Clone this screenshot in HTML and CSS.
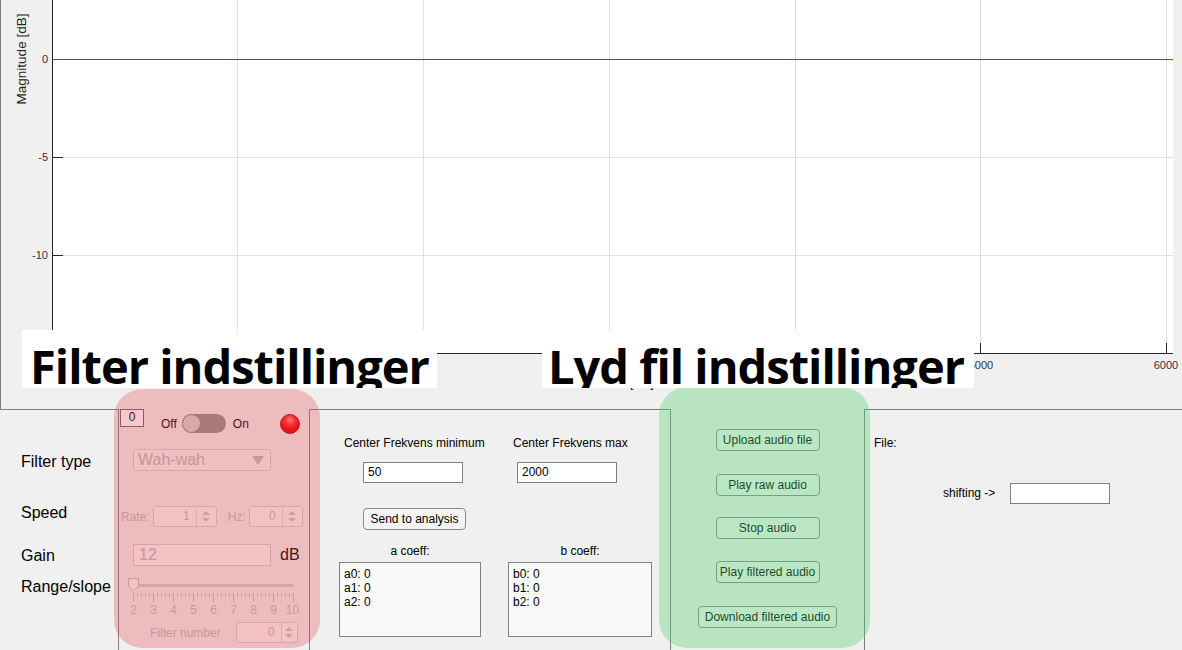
FILE: index.html
```html
<!DOCTYPE html>
<html>
<head>
<meta charset="utf-8">
<title>Filter app</title>
<link rel="stylesheet" href="styles.css">
</head>
<body>
<div class="app">
  <div class="figure">
    <svg class="plot" width="1182" height="409" viewBox="0 0 1182 409">
      <line class="frame" x1="0.5" y1="0" x2="0.5" y2="409"/>
      <rect class="axes-bg" x="52" y="0" width="1121" height="353"/>
      <g class="grid">
        <line x1="237.5" y1="0" x2="237.5" y2="353"/>
        <line x1="423.5" y1="0" x2="423.5" y2="353"/>
        <line x1="609.5" y1="0" x2="609.5" y2="353"/>
        <line x1="795.5" y1="0" x2="795.5" y2="353"/>
        <line x1="980.5" y1="0" x2="980.5" y2="353"/>
        <line x1="1166.5" y1="0" x2="1166.5" y2="353"/>
        <line x1="53" y1="157.5" x2="1173" y2="157.5"/>
        <line x1="53" y1="255.5" x2="1173" y2="255.5"/>
      </g>
      <line class="curve" x1="53" y1="59.5" x2="1173" y2="59.5"/>
      <g class="axis">
        <line x1="52.5" y1="0" x2="52.5" y2="354"/>
        <line x1="52" y1="353.5" x2="1173" y2="353.5"/>
        <line x1="52" y1="157.5" x2="63" y2="157.5"/>
        <line x1="52" y1="255.5" x2="63" y2="255.5"/>
        <line x1="237.5" y1="343" x2="237.5" y2="353"/>
        <line x1="423.5" y1="343" x2="423.5" y2="353"/>
        <line x1="609.5" y1="343" x2="609.5" y2="353"/>
        <line x1="795.5" y1="343" x2="795.5" y2="353"/>
        <line x1="980.5" y1="343" x2="980.5" y2="353"/>
        <line x1="1166.5" y1="343" x2="1166.5" y2="353"/>
      </g>
      <g class="ticklabels">
        <text x="48" y="63" text-anchor="end">0</text>
        <text x="48" y="161" text-anchor="end">-5</text>
        <text x="48" y="259" text-anchor="end">-10</text>
        <text x="52" y="369" text-anchor="middle">0</text>
        <text x="237" y="369" text-anchor="middle">1000</text>
        <text x="423" y="369" text-anchor="middle">2000</text>
        <text x="609" y="369" text-anchor="middle">3000</text>
        <text x="795" y="369" text-anchor="middle">4000</text>
        <text x="981" y="369" text-anchor="middle">5000</text>
        <text x="1166" y="369" text-anchor="middle">6000</text>
      </g>
      <text class="axlabel" transform="translate(25.5 59) rotate(-90)" text-anchor="middle">Magnitude [dB]</text>
      <text class="axlabel" x="612" y="387" text-anchor="middle">Frekvens [Hz]</text>
    </svg>
  </div>

  <div class="controls">
    <div class="panel p-labels">
      <div class="lbl l-type">Filter type</div>
      <div class="lbl l-speed">Speed</div>
      <div class="lbl l-gain">Gain</div>
      <div class="lbl l-range">Range/slope</div>
    </div>

    <div class="panel p-filter">
      <div class="f-top">
        <div class="zero">0</div>
        <span class="sw-txt sw-off">Off</span>
        <div class="switch"><span class="knob"></span></div>
        <span class="sw-txt sw-on">On</span>
        <div class="lamp"></div>
      </div>
      <div class="dropdown"><span class="dd-text">Wah-wah</span><span class="dd-arrow"></span></div>
      <div class="f-speed">
        <span class="dis-txt">Rate:</span>
        <div class="spin spin-rate"><span class="spin-val">1</span><span class="spin-arrows"><i class="up"></i><i class="down"></i></span></div>
        <span class="dis-txt hz">Hz:</span>
        <div class="spin spin-hz"><span class="spin-val">0</span><span class="spin-arrows"><i class="up"></i><i class="down"></i></span></div>
      </div>
      <div class="f-gain">
        <div class="edit-dis">12</div>
        <span class="db">dB</span>
      </div>
      <svg class="slider" width="176" height="42" viewBox="0 0 176 42">
        <line class="track" x1="7" y1="9.5" x2="168" y2="9.5"/>
        <g class="minor">
          <line x1="11.5" y1="17" x2="11.5" y2="21"/><line x1="15.5" y1="17" x2="15.5" y2="21"/><line x1="19.5" y1="17" x2="19.5" y2="21"/><line x1="23.5" y1="17" x2="23.5" y2="21"/>
          <line x1="31.5" y1="17" x2="31.5" y2="21"/><line x1="35.5" y1="17" x2="35.5" y2="21"/><line x1="39.5" y1="17" x2="39.5" y2="21"/><line x1="43.5" y1="17" x2="43.5" y2="21"/>
          <line x1="51.5" y1="17" x2="51.5" y2="21"/><line x1="55.5" y1="17" x2="55.5" y2="21"/><line x1="59.5" y1="17" x2="59.5" y2="21"/><line x1="63.5" y1="17" x2="63.5" y2="21"/>
          <line x1="71.5" y1="17" x2="71.5" y2="21"/><line x1="75.5" y1="17" x2="75.5" y2="21"/><line x1="79.5" y1="17" x2="79.5" y2="21"/><line x1="83.5" y1="17" x2="83.5" y2="21"/>
          <line x1="91.5" y1="17" x2="91.5" y2="21"/><line x1="95.5" y1="17" x2="95.5" y2="21"/><line x1="99.5" y1="17" x2="99.5" y2="21"/><line x1="103.5" y1="17" x2="103.5" y2="21"/>
          <line x1="111.5" y1="17" x2="111.5" y2="21"/><line x1="115.5" y1="17" x2="115.5" y2="21"/><line x1="119.5" y1="17" x2="119.5" y2="21"/><line x1="123.5" y1="17" x2="123.5" y2="21"/>
          <line x1="131.5" y1="17" x2="131.5" y2="21"/><line x1="135.5" y1="17" x2="135.5" y2="21"/><line x1="139.5" y1="17" x2="139.5" y2="21"/><line x1="143.5" y1="17" x2="143.5" y2="21"/>
          <line x1="151.5" y1="17" x2="151.5" y2="21"/><line x1="155.5" y1="17" x2="155.5" y2="21"/><line x1="159.5" y1="17" x2="159.5" y2="21"/><line x1="163.5" y1="17" x2="163.5" y2="21"/>
        </g>
        <g class="major">
          <line x1="7.5" y1="17" x2="7.5" y2="26"/><line x1="27.5" y1="17" x2="27.5" y2="26"/><line x1="47.5" y1="17" x2="47.5" y2="26"/>
          <line x1="67.5" y1="17" x2="67.5" y2="26"/><line x1="87.5" y1="17" x2="87.5" y2="26"/><line x1="107.5" y1="17" x2="107.5" y2="26"/>
          <line x1="127.5" y1="17" x2="127.5" y2="26"/><line x1="147.5" y1="17" x2="147.5" y2="26"/><line x1="167.5" y1="17" x2="167.5" y2="26"/>
        </g>
        <g class="sl-labels">
          <text x="7.5" y="38" text-anchor="middle">2</text><text x="27.5" y="38" text-anchor="middle">3</text><text x="47.5" y="38" text-anchor="middle">4</text>
          <text x="67.5" y="38" text-anchor="middle">5</text><text x="87.5" y="38" text-anchor="middle">6</text><text x="107.5" y="38" text-anchor="middle">7</text>
          <text x="127.5" y="38" text-anchor="middle">8</text><text x="147.5" y="38" text-anchor="middle">9</text><text x="166.5" y="38" text-anchor="middle">10</text>
        </g>
        <path class="thumb" d="M2.5 2.5 H12.5 V10.5 L7.5 15 L2.5 10.5 Z"/>
      </svg>
      <div class="f-num">
        <span class="dis-txt">Filter number</span>
        <div class="spin spin-num"><span class="spin-val">0</span><span class="spin-arrows"><i class="up"></i><i class="down"></i></span></div>
      </div>
    </div>

    <div class="panel p-analysis">
      <div class="a-row a-labels">
        <span class="lbl-sm l-min">Center Frekvens minimum</span>
        <span class="lbl-sm">Center Frekvens max</span>
      </div>
      <div class="a-row a-edits">
        <div class="edit e-min">50</div>
        <div class="edit e-max">2000</div>
      </div>
      <div class="btn b-send">Send to analysis</div>
      <div class="a-row coeffs">
        <div class="coeff c-a">
          <div class="lbl-sm c-title">a coeff:</div>
          <div class="tbox">a0: 0<br>a1: 0<br>a2: 0</div>
        </div>
        <div class="coeff c-b">
          <div class="lbl-sm c-title">b coeff:</div>
          <div class="tbox">b0: 0<br>b1: 0<br>b2: 0</div>
        </div>
      </div>
    </div>

    <div class="panel p-audio">
      <div class="btn ab b1">Upload audio file</div>
      <div class="btn ab b2">Play raw audio</div>
      <div class="btn ab b3">Stop audio</div>
      <div class="btn ab b4">Play filtered audio</div>
      <div class="btn ab b5">Download filtered audio</div>
    </div>

    <div class="panel p-file">
      <div class="lbl-sm file-lbl">File:</div>
      <div class="shift-row">
        <span class="lbl-sm">shifting -&gt;</span>
        <div class="edit e-shift"></div>
      </div>
    </div>
  </div>

  <div class="hl hl-pink"></div>
  <div class="hl hl-green"></div>
  <div class="title-box t-filter">Filter indstillinger</div>
  <div class="title-box t-lyd">Lyd fil indstillinger</div>
</div>
</body>
</html>
```

FILE: styles.css
```css
* { box-sizing: border-box; }
html, body { margin: 0; padding: 0; }
body {
  background: #f0f0f0;
  font-family: "Liberation Sans", Arial, sans-serif;
  color: #000;
}
.app {
  position: relative;
  width: 1182px;
  height: 650px;
  overflow: hidden;
  background: #f0f0f0;
}

/* ---------- figure ---------- */
.figure { height: 409px; }
.plot { display: block; }
.plot .frame { stroke: #808080; stroke-width: 1; }
.plot .axes-bg { fill: #ffffff; }
.plot .grid line { stroke: #dfdfdf; stroke-width: 1; }
.plot .curve { stroke: #0a6ab8; stroke-width: 1; }
.plot .axis line { stroke: #262626; stroke-width: 1; }
.plot .ticklabels text {
  font-family: "Liberation Sans", Arial, sans-serif;
  font-size: 11px;
  fill: #333333;
}
.plot .axlabel {
  font-family: "Liberation Sans", Arial, sans-serif;
  font-size: 13.5px;
  fill: #262626;
}

/* ---------- bottom controls ---------- */
.controls { display: flex; height: 241px; }
.panel { height: 241px; }

.p-labels {
  width: 118px;
  border-top: 1px solid #808080;
  padding-left: 21px;
  display: flex;
  flex-direction: column;
}
.lbl { font-size: 16px; line-height: 18px; white-space: nowrap; }
.l-type { margin-top: 43px; }
.l-speed { margin-top: 33px; }
.l-gain { margin-top: 25px; }
.l-range { margin-top: 13px; }

.p-filter {
  width: 192px;
  border-left: 1px solid #808080;
  border-right: 1px solid #808080;
  display: flex;
  flex-direction: column;
}
.f-top { display: flex; align-items: center; height: 29px; }
.zero {
  align-self: flex-start;
  margin-left: 1px;
  width: 24px;
  height: 18px;
  border: 1px solid #666;
  background: #fff;
  font-size: 12px;
  line-height: 15px;
  text-align: center;
}
.sw-txt { font-size: 12px; line-height: 14px; }
.sw-off { margin-left: 17px; }
.sw-on { margin-left: 7px; }
.switch {
  margin-left: 5px;
  width: 44px;
  height: 19px;
  border-radius: 10px;
  background: #8e8e8e;
  display: flex;
  align-items: center;
}
.knob {
  width: 19px;
  height: 19px;
  border-radius: 50%;
  background: #d2d2d2;
  border: 1px solid #8a8a8a;
}
.lamp {
  margin-left: auto;
  margin-right: 9px;
  width: 20px;
  height: 20px;
  border-radius: 50%;
  border: 1px solid #b00000;
  background: radial-gradient(circle at 50% 28%, #ff9a9a 0, #ff3030 28%, #f00000 60%, #c80000 100%);
}
.dropdown {
  margin-top: 11px;
  margin-left: 14px;
  width: 138px;
  height: 22px;
  border: 1px solid #cfcfcf;
  border-radius: 3px;
  background: #f4f4f4;
  display: flex;
  align-items: center;
  justify-content: space-between;
  padding: 0 6px 0 4px;
}
.dd-text { font-size: 16px; color: #b9b9b9; line-height: 18px; }
.dd-arrow {
  width: 0;
  height: 0;
  border-left: 6px solid transparent;
  border-right: 6px solid transparent;
  border-top: 9px solid #bcbcbc;
}
.dis-txt { font-size: 12px; color: #b9b9b9; line-height: 14px; white-space: nowrap; }
.f-speed {
  margin-top: 35px;
  height: 21px;
  display: flex;
  align-items: center;
  padding-left: 2px;
}
.hz { margin-left: 11px; }
.spin {
  height: 21px;
  border: 1px solid #d0d0d0;
  border-radius: 3px;
  background: #f7f7f7;
  display: flex;
}
.spin-rate { margin-left: 3px; width: 64px; }
.spin-hz { margin-left: 3px; width: 54px; }
.spin-val {
  flex: 1;
  text-align: right;
  padding-right: 6px;
  font-size: 12px;
  line-height: 19px;
  color: #b9b9b9;
}
.spin-arrows {
  width: 20px;
  border-left: 1px solid #d8d8d8;
  display: flex;
  flex-direction: column;
  align-items: center;
  justify-content: center;
  gap: 3px;
}
.spin-num .spin-arrows { width: 16px; }
.spin-arrows i { display: block; width: 0; height: 0; border-left: 4px solid transparent; border-right: 4px solid transparent; }
.spin-arrows .up { border-bottom: 4px solid #c4c4c4; }
.spin-arrows .down { border-top: 4px solid #c4c4c4; }

.f-gain {
  margin-top: 17px;
  display: flex;
  align-items: center;
  padding-left: 14px;
}
.edit-dis {
  width: 138px;
  height: 22px;
  border: 1px solid #cfcfcf;
  background: #f8f8f8;
  font-size: 16px;
  line-height: 20px;
  padding-left: 5px;
  color: #b9b9b9;
}
.db { margin-left: 9px; font-size: 16px; line-height: 18px; }
.slider { display: block; margin-top: 10px; margin-left: 7px; }
.slider .track { stroke: #cfcfcf; stroke-width: 3; }
.slider .minor line, .slider .major line { stroke: #c2c2c2; stroke-width: 1; }
.slider .sl-labels text { font-family: "Liberation Sans", Arial, sans-serif; font-size: 12px; fill: #bcbcbc; }
.slider .thumb { fill: #f6f6f6; stroke: #bdbdbd; stroke-width: 1; }
.f-num {
  margin-top: 4px;
  display: flex;
  align-items: center;
  padding-left: 31px;
}
.spin-num { margin-left: 15px; width: 62px; }

/* analysis panel */
.p-analysis {
  width: 360px;
  border-top: 1px solid #808080;
  display: flex;
  flex-direction: column;
}
.lbl-sm { font-size: 12px; line-height: 15px; white-space: nowrap; }
.a-row { display: flex; }
.a-labels { margin-top: 26px; padding-left: 34px; }
.l-min { width: 169px; }
.a-edits { margin-top: 11px; }
.edit {
  width: 100px;
  height: 21px;
  border: 1px solid #808080;
  background: #fff;
  font-size: 12px;
  line-height: 19px;
  padding-left: 4px;
}
.e-min { margin-left: 53px; }
.e-max { margin-left: 54px; }
.btn {
  height: 22px;
  border: 1px solid #8a8a8a;
  border-radius: 4px;
  background: #f5f5f5;
  font-size: 12px;
  line-height: 20px;
  text-align: center;
  white-space: nowrap;
}
.b-send { margin-top: 25px; margin-left: 53px; width: 103px; }
.coeffs { margin-top: 14px; }
.coeff { display: flex; flex-direction: column; }
.c-a { margin-left: 29px; width: 142px; }
.c-b { margin-left: 27px; width: 144px; }
.c-title { text-align: center; }
.tbox {
  margin-top: 3px;
  height: 75px;
  border: 1px solid #808080;
  background: #f9f9f9;
  font-size: 12px;
  line-height: 14px;
  padding: 4px 0 0 4px;
}

/* audio panel */
.p-audio {
  width: 195px;
  border-left: 1px solid #808080;
  border-right: 1px solid #808080;
  display: flex;
  flex-direction: column;
  align-items: center;
}
.ab { width: 104px; }
.b1 { margin-top: 20px; }
.b2 { margin-top: 23px; }
.b3 { margin-top: 21px; }
.b4 { margin-top: 22px; }
.b5 { margin-top: 23px; width: 139px; }

/* file panel */
.p-file {
  flex: 1;
  border-top: 1px solid #808080;
  display: flex;
  flex-direction: column;
}
.file-lbl { margin-top: 26px; margin-left: 9px; }
.shift-row { margin-top: 32px; display: flex; align-items: center; padding-left: 78px; }
.e-shift { margin-left: 15px; }

/* ---------- annotations ---------- */
.hl { position: absolute; border-radius: 28px; }
.hl-pink {
  left: 114px;
  top: 389px;
  width: 206px;
  height: 259px;
  background: rgba(228, 70, 80, 0.3);
}
.hl-green {
  left: 659px;
  top: 387px;
  width: 211px;
  height: 261px;
  background: rgba(80, 205, 110, 0.35);
}
.title-box {
  position: absolute;
  top: 330px;
  height: 58px;
  overflow: hidden;
  background: #fff;
  font-family: "Open Sans", "Noto Sans", sans-serif;
  font-weight: 700;
  font-size: 47px;
  letter-spacing: -1px;
  line-height: 1.2;
  padding-top: 8px;
  white-space: nowrap;
  color: #000;
}
.t-filter { left: 22px; width: 415px; padding-left: 8px; }
.t-lyd { left: 542px; width: 432px; padding-left: 6px; }
```
